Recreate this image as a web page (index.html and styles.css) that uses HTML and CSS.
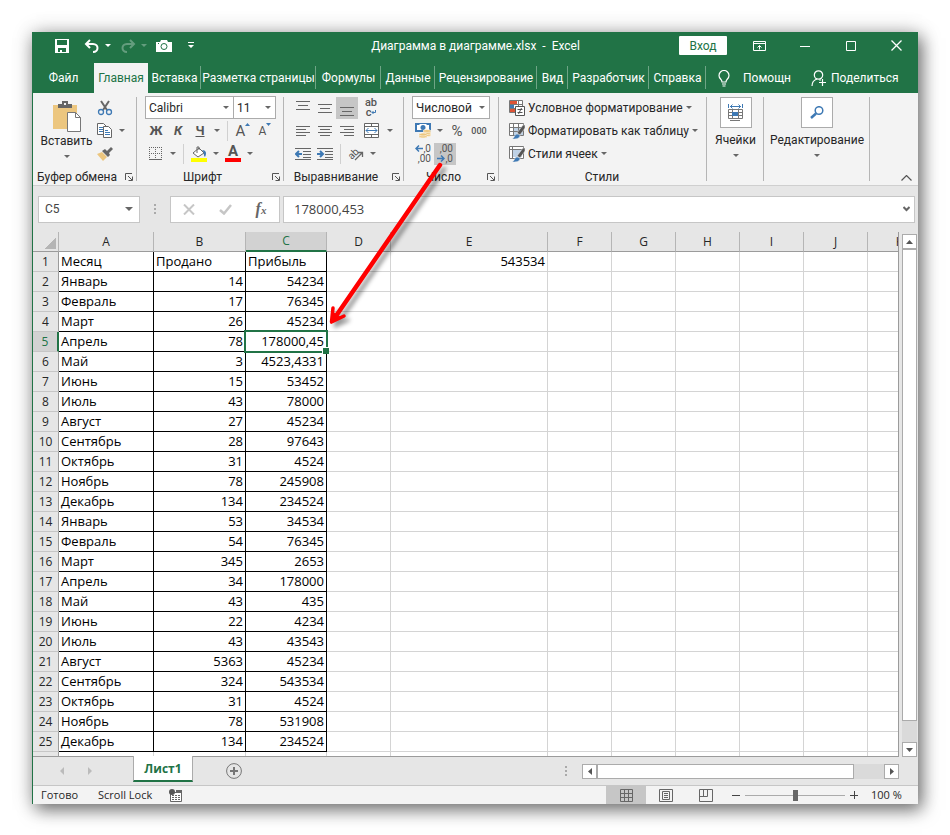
FILE: index.html
```html
<!DOCTYPE html>
<html lang="ru">
<head>
    <meta charset="UTF-8">
    <meta name="viewport" content="width=device-width, initial-scale=1.0">
    <title>Диаграмма в диаграмме.xlsx - Excel</title>
    <link rel="stylesheet" href="styles.css">
</head>
<body>
    <div class="window">
        <!-- Title bar -->
        <header class="titlebar">
            <div class="quick">
                <button class="q-btn" aria-label="Сохранить">
                    <svg width="14" height="14" viewBox="0 0 14 14"><path fill="#fff" fill-rule="evenodd" d="M0 0h14v14H0zM2 1v5h10V1zM3 9v4h2v-2h2v2h4V9z"/></svg>
                </button>
                <button class="q-btn undo" aria-label="Отменить">
                    <svg width="16" height="14" viewBox="0 0 16 14"><path fill="none" stroke="#fff" stroke-width="2" d="M6 1L2 5l4 4M2 5h7c6 0 6 8 0 8"/></svg>
                    <span class="caret"></span>
                </button>
                <button class="q-btn redo" aria-label="Вернуть">
                    <svg width="16" height="14" viewBox="0 0 16 14"><path fill="none" stroke="#fff" stroke-width="2" d="M10 1l4 4-4 4M14 5H7C1 5 1 13 7 13"/></svg>
                    <span class="caret"></span>
                </button>
                <button class="q-btn" aria-label="Камера">
                    <svg width="16" height="12" viewBox="0 0 16 12"><path fill="#fff" d="M0 2h4l1-2h6l1 2h4v10H0z"/><circle cx="8" cy="6.500" r="3" fill="none" stroke="#217346"/><path fill="#217346" d="M2 3h1v1H2z"/></svg>
                </button>
                <button class="q-btn more" aria-label="Настройка панели">
                    <svg width="6" height="7" viewBox="0 0 6 7"><path fill="#fff" d="M0 0h6v1H0zM0 3h6L3 6z"/></svg>
                </button>
            </div>
            <h1>Диаграмма в диаграмме.xlsx &nbsp;- &nbsp;Excel</h1>
            <div class="win-btns">
                <button class="login">Вход</button>
                <button class="w-btn" aria-label="Параметры ленты">
                    <svg width="13" height="10" viewBox="0 0 13 10" fill="none" stroke="#fff"><path d="M.5.5h12v9H.5zM.5 2.500h12M6.500 8.500v-4M4.500 6.500l2-2 2 2"/></svg>
                </button>
                <button class="w-btn" aria-label="Свернуть">
                    <svg width="10" height="10" viewBox="0 0 10 10"><path stroke="#fff" d="M0 5.500h10"/></svg>
                </button>
                <button class="w-btn" aria-label="Развернуть">
                    <svg width="10" height="10" viewBox="0 0 10 10"><path fill="none" stroke="#fff" d="M.5.5h9v9h-9z"/></svg>
                </button>
                <button class="w-btn" aria-label="Закрыть">
                    <svg width="11" height="11" viewBox="0 0 11 11"><path stroke="#fff" stroke-width="1.300" d="M.5.5l10 10M10.500.5l-10 10"/></svg>
                </button>
            </div>
        </header>

        <!-- Ribbon tabs -->
        <nav class="tabs">
            <a href="#" class="file">Файл</a>
            <a href="#" class="active">Главная</a>
            <a href="#">Вставка</a>
            <a href="#">Разметка страницы</a>
            <a href="#">Формулы</a>
            <a href="#">Данные</a>
            <a href="#">Рецензирование</a>
            <a href="#">Вид</a>
            <a href="#">Разработчик</a>
            <a href="#">Справка</a>
            <a href="#" class="help">
                <svg width="12" height="17" viewBox="0 0 12 17" fill="none" stroke="#fff" stroke-width="1.200"><path d="M4 12c0-3-3-3-3-6.500a5 5 0 0 1 10 0C11 9 8 9 8 12zM4 14h4M4.500 16h3"/></svg>
                Помощн
            </a>
            <a href="#" class="share">
                <svg width="16" height="16" viewBox="0 0 16 16" fill="none" stroke="#fff" stroke-width="1.200"><circle cx="7.500" cy="5" r="4.200"/><path d="M1 16c0-4 2-6 5-7M8.500 9.500l1 1M11.500 9v7M8 12.500h7"/></svg>
                Поделиться
            </a>
        </nav>

        <!-- Ribbon -->
        <div class="ribbon">
            <section class="group g-clip">
                <div class="group-body cols">
                    <button class="paste">
                        <svg width="30" height="32" viewBox="0 0 30 32"><path fill="#ecc67f" d="M1 5h24v24H1z"/><path fill="#666" d="M6 4h4V1h6v3h4v4H6z"/><path fill="#f3f3f3" d="M12 3h2v2h-2z"/><path fill="#fff" stroke="#777" d="M15.500 12.500h8l5 5v14h-13z"/><path fill="none" stroke="#777" d="M23.500 12.500v5h5"/></svg>
                        <span>Вставить</span>
                        <span class="caret"></span>
                    </button>
                    <div class="stack">
                        <div class="row">
                            <button class="tool" aria-label="Вырезать">
                                <svg width="16" height="16" viewBox="0 0 16 16" fill="none"><path stroke="#666" stroke-width="2" d="M4 1l6 9M12 1L6 10"/><circle cx="4" cy="12" r="2.500" stroke="#3e79b4" stroke-width="1.300"/><circle cx="12" cy="12" r="2.500" stroke="#3e79b4" stroke-width="1.300"/></svg>
                            </button>
                        </div>
                        <div class="row">
                            <button class="tool" aria-label="Копировать">
                                <svg width="16" height="15" viewBox="0 0 16 15" fill="#fff" stroke="#666"><path d="M.5.5h6l3 3v8h-9z"/><path stroke="#3e79b4" d="M2 4.500h4M2 6.500h4M2 8.500h4"/><path d="M6.500 3.500h5l3 3v8h-8z"/><path stroke="#3e79b4" d="M8 7.500h3M8 9.500h5M8 11.500h5"/></svg>
                            </button>
                            <button class="arrow" aria-label="Варианты копирования"><span class="caret"></span></button>
                        </div>
                        <div class="row">
                            <button class="tool" aria-label="Формат по образцу">
                                <svg width="16" height="14" viewBox="0 0 16 14"><path fill="#ecc67f" d="M0 7l5-2 5 5-4 4z"/><path fill="#666" d="M5 4l3-2 2 2 4-4 2 2-4 4 1 2-2 2z"/></svg>
                            </button>
                        </div>
                    </div>
                </div>
                <footer><h2>Буфер обмена</h2><button class="launch" aria-label="Буфер обмена: параметры"><svg width="8" height="8" viewBox="0 0 8 8"><path fill="none" stroke="#555" d="M7 .5H.5V7M3 3l4 4M7.500 3.500v4h-4"/></svg></button></footer>
            </section>

            <section class="group g-font">
                <div class="group-body">
                    <div class="row">
                        <label class="combo font-name"><select aria-label="Шрифт"><option>Calibri</option></select><span class="caret"></span></label>
                        <label class="combo font-size"><select aria-label="Размер"><option>11</option></select><span class="caret"></span></label>
                    </div>
                    <div class="row">
                        <button class="tool letter">Ж</button>
                        <button class="tool letter italic">К</button>
                        <button class="tool letter under">Ч</button>
                        <button class="arrow" aria-label="Подчёркивание"><span class="caret"></span></button>
                        <span class="sep"></span>
                        <button class="tool grow">A<svg width="5" height="3" viewBox="0 0 5 3"><path fill="#3e79b4" d="M0 3h5L2.500 0z"/></svg></button>
                        <button class="tool grow small">A<svg width="5" height="3" viewBox="0 0 5 3"><path fill="#3e79b4" d="M0 0h5L2.500 3z"/></svg></button>
                    </div>
                    <div class="row">
                        <button class="tool" aria-label="Границы">
                            <svg width="14" height="13" viewBox="0 0 14 13" fill="none" stroke="#666"><path stroke-dasharray="1 1" d="M0 .5h13M0 6.500h13M.5 0v12M6.500 0v12M12.500 0v12"/><path d="M0 12.500h13"/></svg>
                        </button>
                        <button class="arrow" aria-label="Варианты границ"><span class="caret"></span></button>
                        <span class="sep"></span>
                        <button class="tool" aria-label="Цвет заливки">
                            <svg width="16" height="16" viewBox="0 0 16 16"><path fill="#fff" stroke="#666" d="M2 7l6-5 5 5-6 4z"/><path fill="none" stroke="#666" d="M6 7V1h2v3"/><path fill="#3e79b4" d="M11 4c4 0 5 3 3 7-2-2 0-4-3-7z"/><path fill="#ff0" d="M0 12h16v4H0z"/></svg>
                        </button>
                        <button class="arrow" aria-label="Выбор заливки"><span class="caret"></span></button>
                        <button class="tool color">A</button>
                        <button class="arrow" aria-label="Выбор цвета"><span class="caret"></span></button>
                    </div>
                </div>
                <footer><h2>Шрифт</h2><button class="launch" aria-label="Шрифт: параметры"><svg width="8" height="8" viewBox="0 0 8 8"><path fill="none" stroke="#555" d="M7 .5H.5V7M3 3l4 4M7.500 3.500v4h-4"/></svg></button></footer>
            </section>

            <section class="group g-align">
                <div class="group-body">
                    <div class="row">
                        <button class="tool" aria-label="По верхнему краю"><svg width="14" height="16" viewBox="0 0 14 16"><path stroke="#666" d="M0 1.500h14M2 5.500h10M0 9.500h14"/></svg></button>
                        <button class="tool" aria-label="По середине"><svg width="14" height="16" viewBox="0 0 14 16"><path stroke="#666" d="M0 4.500h14M2 8.500h10M0 12.500h14"/></svg></button>
                        <button class="tool on" aria-label="По нижнему краю"><svg width="14" height="16" viewBox="0 0 14 16"><path stroke="#666" d="M0 7.500h14M2 11.500h10M0 15.500h14"/></svg></button>
                        <button class="tool wide wrap" aria-label="Перенести текст"><span>ab</span><span>c<svg width="5" height="5" viewBox="0 0 5 5"><path fill="none" stroke="#3e79b4" d="M4.500 0v2.500H1M2.500 1L1 2.500 2.500 4"/></svg></span></button>
                    </div>
                    <div class="row">
                        <button class="tool" aria-label="По левому краю"><svg width="14" height="12" viewBox="0 0 14 12"><path stroke="#666" d="M0 1.500h14M0 4.500h10M0 7.500h14M0 10.500h10"/></svg></button>
                        <button class="tool" aria-label="По центру"><svg width="14" height="12" viewBox="0 0 14 12"><path stroke="#666" d="M0 1.500h14M2 4.500h10M0 7.500h14M2 10.500h10"/></svg></button>
                        <button class="tool" aria-label="По правому краю"><svg width="14" height="12" viewBox="0 0 14 12"><path stroke="#666" d="M0 1.500h14M4 4.500h10M0 7.500h14M4 10.500h10"/></svg></button>
                        <button class="tool wide" aria-label="Объединить"><svg width="15" height="15" viewBox="0 0 15 15" fill="none" stroke="#666"><path fill="#fff" d="M.5.5h14v14H.5z"/><path d="M0 3.500h15M0 11.500h15M7.500 0v3M7.500 12v3"/><path stroke="#3e79b4" d="M2 7.500h11M4.500 5L2 7.500 4.500 10M10.500 5L13 7.500 10.500 10"/></svg></button>
                        <button class="arrow" aria-label="Варианты объединения"><span class="caret"></span></button>
                    </div>
                    <div class="row">
                        <button class="tool" aria-label="Уменьшить отступ"><svg width="16" height="12" viewBox="0 0 16 12" fill="none"><path stroke="#666" d="M0 .5h16M8 3.500h8M8 6.500h8M8 9.500h8M0 11.500h16"/><path stroke="#3e79b4" stroke-width="2" d="M7 6H1M4 3L1 6l3 3"/></svg></button>
                        <button class="tool" aria-label="Увеличить отступ"><svg width="16" height="12" viewBox="0 0 16 12" fill="none"><path stroke="#666" d="M0 .5h16M8 3.500h8M8 6.500h8M8 9.500h8M0 11.500h16"/><path stroke="#3e79b4" stroke-width="2" d="M0 6h6M3 3l3 3-3 3"/></svg></button>
                        <span class="sep"></span>
                        <button class="tool orient" aria-label="Ориентация"><span>ab</span><svg width="10" height="10" viewBox="0 0 10 10"><path fill="none" stroke="#666" stroke-width="1.300" d="M1 9l7-7M4 1.500h4.500V6"/></svg></button>
                        <button class="arrow" aria-label="Выбор ориентации"><span class="caret"></span></button>
                    </div>
                </div>
                <footer><h2>Выравнивание</h2><button class="launch" aria-label="Выравнивание: параметры"><svg width="8" height="8" viewBox="0 0 8 8"><path fill="none" stroke="#555" d="M7 .5H.5V7M3 3l4 4M7.500 3.500v4h-4"/></svg></button></footer>
            </section>

            <section class="group g-num">
                <div class="group-body">
                    <div class="row">
                        <label class="combo"><select aria-label="Числовой формат"><option>Числовой</option></select><span class="caret"></span></label>
                    </div>
                    <div class="row">
                        <button class="tool" aria-label="Финансовый формат"><svg width="16" height="15" viewBox="0 0 16 15"><path fill="#3e79b4" d="M0 0h16v9H0z"/><path fill="#fff" d="M2 2h2l1-1h6l1 1h2v5H2z"/><circle cx="8" cy="4.500" r="2.500" fill="#3e79b4"/><g fill="#ecc67f" stroke="#fff" stroke-width=".5"><ellipse cx="12" cy="12" rx="4" ry="1.500"/><ellipse cx="12" cy="10" rx="4" ry="1.500"/><ellipse cx="12" cy="8" rx="4" ry="1.500"/><ellipse cx="8" cy="13.500" rx="4" ry="1.500"/><ellipse cx="8" cy="11.500" rx="4" ry="1.500"/></g></svg></button>
                        <button class="arrow" aria-label="Выбор валюты"><span class="caret"></span></button>
                        <button class="tool percent">%</button>
                        <button class="tool zeros">000</button>
                    </div>
                    <div class="row">
                        <button class="tool digits" aria-label="Увеличить разрядность"><span><svg width="8" height="7" viewBox="0 0 8 7"><path fill="none" stroke="#3e79b4" stroke-width="1.500" d="M8 3.500H1M4 .5l-3 3 3 3"/></svg>,0</span><span>,00</span></button>
                        <button class="tool digits on" aria-label="Уменьшить разрядность"><span>,00</span><span><svg width="8" height="7" viewBox="0 0 8 7"><path fill="none" stroke="#3e79b4" stroke-width="1.500" d="M0 3.500h7M4 .5l3 3-3 3"/></svg>,0</span></button>
                    </div>
                </div>
                <footer><h2>Число</h2><button class="launch" aria-label="Число: параметры"><svg width="8" height="8" viewBox="0 0 8 8"><path fill="none" stroke="#555" d="M7 .5H.5V7M3 3l4 4M7.500 3.500v4h-4"/></svg></button></footer>
            </section>

            <section class="group g-styles">
                <div class="group-body">
                    <div class="row">
                        <button class="text-btn"><svg width="16" height="16" viewBox="0 0 16 16"><path fill="#fff" stroke="#777" d="M.5.5h13v12H.5z"/><path fill="#dd5437" d="M1 1h7v3H1zM1 9h5v3H1z"/><path fill="#3e79b4" d="M1 5h4v3H1z"/><path stroke="#777" d="M0 4.500h13M0 8.500h6M9.500 0v6"/><path fill="#fff" stroke="#555" d="M6.500 6.500h9v9h-9z"/><path stroke="#555" d="M8.500 9.500h5M8.500 12.500h5M12.500 8l-3 6"/></svg>Условное форматирование<span class="caret"></span></button>
                    </div>
                    <div class="row">
                        <button class="text-btn"><svg width="16" height="16" viewBox="0 0 16 16"><path fill="#fff" stroke="#777" d="M.5.5h14v12H.5z"/><path fill="#bfd2e6" d="M5 4h9v8H5z"/><path stroke="#777" d="M0 4.500h14M0 8.500h14M4.500 0v12M9.500 0v12"/><path fill="#555" stroke="#f3f3f3" stroke-width=".5" d="M8 10l6-8h2v3l-5 7z"/><path fill="#3e79b4" stroke="#f3f3f3" stroke-width=".5" d="M3 16c3-1 2-5 5-5 2 0 3 1 3 2-1 3-4 3-8 3z"/></svg>Форматировать как таблицу<span class="caret"></span></button>
                    </div>
                    <div class="row">
                        <button class="text-btn"><svg width="16" height="16" viewBox="0 0 16 16"><path fill="#fff" stroke="#777" d="M.5.5h14v12H.5z"/><path stroke="#777" d="M0 3.500h14M3.500 0v12"/><path fill="#bfd2e6" d="M4 4h9v7H4z"/><path fill="#555" stroke="#f3f3f3" stroke-width=".5" d="M8 10l6-8h2v3l-5 7z"/><path fill="#3e79b4" stroke="#f3f3f3" stroke-width=".5" d="M3 16c3-1 2-5 5-5 2 0 3 1 3 2-1 3-4 3-8 3z"/></svg>Стили ячеек<span class="caret"></span></button>
                    </div>
                </div>
                <footer><h2>Стили</h2></footer>
            </section>

            <section class="group g-cells">
                <button class="big">
                    <span class="box"><svg width="16" height="17" viewBox="0 0 16 17" fill="none"><path stroke="#3e79b4" d="M.5 0v4M14.500 0v4M2 2.500h11M4.500.5l-2 2 2 2M10.500.5l2 2-2 2"/><path stroke="#777" d="M.5 5.500h14v9H.5zM0 8.500h15M0 11.500h15M4.500 5v10M10.500 5v10M2 16.500h10"/><path fill="#3e79b4" d="M4 8h6v4H4z"/></svg></span>
                    <span>Ячейки</span>
                    <span class="caret"></span>
                </button>
            </section>
            <section class="group g-edit">
                <button class="big">
                    <span class="box"><svg width="14" height="13" viewBox="0 0 14 13" fill="none" stroke="#3e79b4"><circle cx="9" cy="4.500" r="3.800" stroke-width="1.500"/><path stroke-width="2.500" d="M6 7.500L1 12"/></svg></span>
                    <span>Редактирование</span>
                    <span class="caret"></span>
                </button>
            </section>
            <button class="collapse" aria-label="Свернуть ленту"><svg width="11" height="6" viewBox="0 0 11 6"><path fill="none" stroke="#555" stroke-width="1.200" d="M.5 5.500l5-5 5 5"/></svg></button>
        </div>

        <!-- Formula bar -->
        <div class="formula-bar">
            <div class="name-box"><input type="text" value="C5" aria-label="Имя"><span class="caret big-caret"></span></div>
            <span class="dots"></span>
            <div class="fx">
                <button aria-label="Отмена"><svg width="12" height="11" viewBox="0 0 12 11"><path stroke="#c6c6c6" stroke-width="2" d="M1 .5l10 10M11 .5l-10 10"/></svg></button>
                <button aria-label="Ввод"><svg width="13" height="11" viewBox="0 0 13 11"><path fill="none" stroke="#c6c6c6" stroke-width="2.500" d="M1 6l4 3.500L12 1"/></svg></button>
                <button class="fx-sign"><i>f<small>x</small></i></button>
            </div>
            <div class="formula"><input type="text" value="178000,453" aria-label="Формула"><svg width="7" height="6" viewBox="0 0 7 6"><path fill="none" stroke="#666" stroke-width="2" d="M.5 1l3 3 3-3"/></svg></div>
        </div>

        <!-- Sheet -->
        <div class="sheet">
            <div class="grid">
                <table>
                    <colgroup>
                        <col class="c-num"><col class="c-a"><col class="c-b"><col class="c-c"><col class="c-d"><col class="c-e"><col class="c-f"><col class="c-f"><col class="c-f"><col class="c-f"><col class="c-f"><col class="c-f">
                    </colgroup>
                    <thead>
                        <tr><th class="corner"></th><th>A</th><th>B</th><th class="sel">C</th><th>D</th><th>E</th><th>F</th><th>G</th><th>H</th><th>I</th><th>J</th><th>K</th></tr>
                    </thead>
                    <tbody id="rows"></tbody>
                </table>
            </div>
            <div class="vscroll">
                <button aria-label="Вверх"><svg width="7" height="4" viewBox="0 0 7 4"><path fill="#555" d="M0 4h7L3.500 0z"/></svg></button>
                <div class="v-thumb"></div>
                <button aria-label="Вниз"><svg width="7" height="4" viewBox="0 0 7 4"><path fill="#555" d="M0 0h7L3.500 4z"/></svg></button>
            </div>
        </div>

        <!-- Sheet tabs -->
        <div class="sheet-tabs">
            <div class="sheet-nav">
                <button aria-label="Предыдущий лист"><svg width="4" height="8" viewBox="0 0 4 8"><path fill="#bbb" d="M4 0v8L0 4z"/></svg></button>
                <button aria-label="Следующий лист"><svg width="4" height="8" viewBox="0 0 4 8"><path fill="#bbb" d="M0 0v8l4-4z"/></svg></button>
            </div>
            <a href="#" class="sheet-tab">Лист1</a>
            <button class="add" aria-label="Новый лист"><svg width="16" height="16" viewBox="0 0 16 16" fill="none" stroke="#777"><circle cx="8" cy="8" r="7.400"/><path stroke-width="2" d="M4 8h8M8 4v8"/></svg></button>
            <span class="dots"></span>
            <div class="hscroll">
                <button aria-label="Влево"><svg width="4" height="7" viewBox="0 0 4 7"><path fill="#555" d="M4 0v7L0 3.500z"/></svg></button>
                <div class="h-thumb"></div>
                <button aria-label="Вправо"><svg width="4" height="7" viewBox="0 0 4 7"><path fill="#555" d="M0 0v7l4-3.500z"/></svg></button>
            </div>
        </div>

        <!-- Status bar -->
        <footer class="status">
            <span class="ready">Готово</span>
            <span class="lock">Scroll Lock</span>
            <svg width="14" height="13" viewBox="0 0 14 13"><path fill="#fff" stroke="#666" d="M1.500 3.500h11v9h-11z"/><path fill="#666" d="M7 1h6v3H7z"/><path stroke="#666" stroke-dasharray="2 1" d="M3 6.500h8M3 8.500h8M3 10.500h8"/><circle cx="3" cy="3" r="3" fill="#555"/></svg>
            <div class="views">
                <button class="on" aria-label="Обычный"><svg width="13" height="13" viewBox="0 0 13 13"><path fill="none" stroke="#666" d="M.5.5h12v12H.5zM0 4.500h13M0 8.500h13M4.500 0v13M8.500 0v13"/></svg></button>
                <button aria-label="Разметка страницы"><svg width="14" height="13" viewBox="0 0 14 13"><path fill="none" stroke="#666" d="M.5.5h13v12H.5zM3.500 2.500h7v8h-7zM5 4.500h4M5 6.500h4M5 8.500h4"/></svg></button>
                <button aria-label="Страничный"><svg width="14" height="13" viewBox="0 0 14 13"><path fill="none" stroke="#666" d="M.5.5h13v12H.5zM.5 7.500h8v-7M4.500 0v7"/></svg></button>
            </div>
            <button class="zoom-btn" aria-label="Уменьшить"><svg width="8" height="8" viewBox="0 0 8 8"><path stroke="#444" d="M0 4.500h8"/></svg></button>
            <input type="range" min="0" max="100" value="50" aria-label="Масштаб">
            <button class="zoom-btn" aria-label="Увеличить"><svg width="8" height="8" viewBox="0 0 8 8"><path stroke="#444" d="M0 4.500h8M4.500 0v8"/></svg></button>
            <span class="zoom">100 %</span>
        </footer>

        <!-- Pointer to the selected cell -->
        <svg class="pointer" width="130" height="180" viewBox="0 0 130 180" fill="none" stroke="#f00" stroke-linecap="round" stroke-linejoin="round">
            <path stroke-width="4.500" d="M122 9L18 160"/>
            <path stroke-width="3.500" d="M15 152L13.500 166L26 160"/>
            <path fill="#f00" d="M13 167L16 157L22 161Z"/>
        </svg>
    </div>

    <script>
        const data = [
            ["Месяц", "Продано", "Прибыль"],
            ["Январь", 14, "54234"],
            ["Февраль", 17, "76345"],
            ["Март", 26, "45234"],
            ["Апрель", 78, "178000,45"],
            ["Май", 3, "4523,4331"],
            ["Июнь", 15, "53452"],
            ["Июль", 43, "78000"],
            ["Август", 27, "45234"],
            ["Сентябрь", 28, "97643"],
            ["Октябрь", 31, "4524"],
            ["Ноябрь", 78, "245908"],
            ["Декабрь", 134, "234524"],
            ["Январь", 53, "34534"],
            ["Февраль", 54, "76345"],
            ["Март", 345, "2653"],
            ["Апрель", 34, "178000"],
            ["Май", 43, "435"],
            ["Июнь", 22, "4234"],
            ["Июль", 43, "43543"],
            ["Август", 5363, "45234"],
            ["Сентябрь", 324, "543534"],
            ["Октябрь", 31, "4524"],
            ["Ноябрь", 78, "531908"],
            ["Декабрь", 134, "234524"]
        ];
        const tbody = document.getElementById("rows");

        data.forEach((row, i) => {
            const tr = document.createElement("tr");
            const selected = i === 4;
            let html = `<th class="${selected ? "sel" : ""}">${i + 1}</th>`;
            row.forEach((value, col) => {
                let cls = "data";
                if (col > 0 && i > 0) cls += " num";
                if (selected && col === 2) cls += " current";
                html += `<td class="${cls}">${value}</td>`;
            });
            html += "<td></td>";
            html += `<td class="num">${i === 0 ? "543534" : ""}</td>`;
            html += "<td></td>".repeat(6);
            tr.innerHTML = html;
            tbody.appendChild(tr);
        });

        // top edge of the next row
        const cut = document.createElement("tr");
        cut.className = "cut";
        cut.innerHTML = "<th></th>" + "<td></td>".repeat(11);
        tbody.appendChild(cut);
    </script>
</body>
</html>
```
FILE: styles.css
```css
* {
    box-sizing: border-box;
}
body {
    margin: 0;
    padding: 32px;
    background: #fff;
    font-family: Roboto, "Open Sans", sans-serif;
    font-size: 12px;
    line-height: 16px;
    color: #262626;
}
button, input, select {
    font: inherit;
    color: inherit;
    background: none;
    border: none;
    border-radius: 0;
    padding: 0;
    margin: 0;
    outline: none;
}
button {
    display: flex;
    align-items: center;
    justify-content: center;
    flex: none;
    white-space: nowrap;
}
svg {
    display: block;
    flex: none;
}
a {
    color: inherit;
    text-decoration: none;
}
h1, h2 {
    font-size: 12px;
    font-weight: normal;
    margin: 0;
    white-space: nowrap;
}
.caret {
    flex: none;
    border: 3px solid transparent;
    border-top-color: #666;
    border-bottom: none;
}
.window {
    position: relative;
    border-left: 1px solid #217346;
    background: #e6e6e6;
    box-shadow: 4px 6px 16px rgba(0, 0, 0, 0.5), 0 0 20px rgba(0, 0, 0, 0.2);
}

/* Title bar */
.titlebar {
    display: grid;
    grid-template-columns: 1fr auto 1fr;
    align-items: center;
    height: 31px;
    padding-bottom: 4px;
    background: #217346;
    color: #fff;
}
.quick {
    display: flex;
    align-items: center;
    padding-left: 22px;
    gap: 9px;
}
.q-btn {
    gap: 5px;
}
.q-btn .caret {
    border-top-color: #fff;
}
.undo {
    margin-left: 6px;
}
.redo {
    opacity: 0.3;
}
.more {
    margin-left: 7px;
}
.win-btns {
    display: flex;
    align-items: center;
    justify-content: flex-end;
}
.login {
    width: 48px;
    height: 19px;
    margin-right: 9px;
    background: #fff;
    color: #217346;
    border-radius: 1px;
}
.w-btn {
    width: 46px;
    height: 24px;
}
.w-btn:last-child {
    width: 44px;
}

/* Ribbon tabs */
.tabs {
    display: grid;
    grid-template-columns: 61px 54px 53px 115px 65px 54px 102px 31px 81px 57px 105px 1fr;
    height: 30px;
    background: #217346;
    color: #fff;
}
.tabs a {
    display: flex;
    align-items: center;
    justify-content: center;
    white-space: nowrap;
    background: linear-gradient(#6fa586, #6fa586) no-repeat right 3px / 1px 23px;
}
.tabs .file, .tabs .help, .tabs .share {
    background: none;
}
.tabs .active {
    background: #f3f3f3;
    color: #217346;
}
.tabs .help {
    gap: 13px;
    justify-content: flex-start;
    padding-left: 12px;
}
.tabs .share {
    gap: 4px;
    justify-content: flex-start;
}

/* Ribbon */
.ribbon {
    display: flex;
    height: 93px;
    padding-top: 3px;
    background: #f3f3f3;
    border-bottom: 1px solid #cfcfcf;
}
.group {
    display: flex;
    flex-direction: column;
    flex: none;
    background: linear-gradient(#b5b5b5, #b5b5b5) no-repeat right 1px / 1px 84px;
}
.group-body {
    height: 73px;
    padding-left: 8px;
}
.g-clip { width: 104px; }
.g-font { width: 147px; }
.g-align { width: 120px; }
.g-num { width: 95px; }
.g-styles { width: 208px; }
.g-cells { width: 57px; }
.g-edit { width: 106px; }
.group footer {
    display: flex;
    align-items: center;
}
.group h2 {
    flex: 1;
    text-align: center;
}
.launch {
    width: 16px;
}
.row {
    display: flex;
    align-items: center;
    height: 23px;
}
.cols {
    display: flex;
    padding-left: 6px;
}
.paste {
    width: 55px;
    flex-direction: column;
    justify-content: flex-start;
    padding-top: 4px;
}
.paste span {
    line-height: 19px;
}
.paste .caret {
    margin-top: 4px;
}
.tool {
    width: 22px;
    height: 22px;
    color: #555;
}
.tool.on {
    background: #c6c6c6;
}
.wide {
    width: 26px;
}
.arrow {
    width: 12px;
    height: 22px;
}
.sep {
    width: 1px;
    height: 20px;
    margin: 0 4px;
    background: #d0d0d0;
}
.combo {
    display: flex;
    align-items: center;
    justify-content: space-between;
    height: 23px;
    width: 78px;
    padding: 0 4px 0 3px;
    background: #fff;
    border: 1px solid #ababab;
}
.combo select {
    appearance: none;
    flex: 1;
    min-width: 0;
}
.font-name {
    width: 89px;
}
.font-size {
    width: 43px;
    margin-left: -1px;
}
.letter {
    font-weight: bold;
    font-size: 13px;
}
.italic {
    font-style: italic;
}
.under {
    text-decoration: underline;
}
.grow {
    font-size: 15px;
}
.grow svg {
    align-self: flex-start;
    margin-top: 3px;
}
.small {
    font-size: 12px;
}
.color {
    width: 22px;
    font-size: 15px;
    font-weight: bold;
    line-height: 14px;
    background: linear-gradient(#f00, #f00) no-repeat center 15px / 16px 4px;
    padding-bottom: 6px;
}
.wrap, .digits {
    flex-direction: column;
    line-height: 10px;
}
.wrap span, .digits span {
    display: flex;
    align-items: center;
}
.wrap {
    font-size: 11px;
    font-weight: 500;
}
.digits {
    font-size: 10px;
    align-items: flex-end;
    padding-right: 3px;
}
.orient span {
    font-size: 10px;
    transform: rotate(-45deg);
}
.orient svg {
    margin-left: -5px;
    margin-top: 4px;
}
.percent {
    font-size: 15px;
}
.zeros {
    font-size: 9px;
    font-weight: 500;
}
.text-btn {
    gap: 3px;
    margin-left: 2px;
}
.g-styles h2 {
    padding-right: 2px;
}
.big {
    flex-direction: column;
    align-self: center;
    padding-top: 1px;
}
.box {
    display: flex;
    align-items: center;
    justify-content: center;
    width: 32px;
    height: 31px;
    margin-bottom: 4px;
    background: #fff;
    border: 1px solid #ababab;
}
.big .caret {
    margin-top: 6px;
}
.collapse {
    align-self: flex-end;
    margin-left: auto;
    padding: 0 6px 4px;
}

/* Formula bar */
.formula-bar {
    display: flex;
    align-items: center;
    height: 46px;
    padding: 0 3px 0 5px;
    color: #444;
}
.name-box, .fx, .formula {
    display: flex;
    align-items: center;
    height: 27px;
    background: #fff;
    border: 1px solid #c6c6c6;
}
.name-box {
    width: 102px;
    padding: 0 6px;
}
.name-box input {
    flex: 1;
    min-width: 0;
}
.big-caret {
    border-width: 4px;
    border-bottom: none;
}
.dots {
    flex: none;
    width: 2px;
    height: 10px;
    background: repeating-linear-gradient(#aaa 0 2px, transparent 2px 4px);
}
.formula-bar .dots {
    margin: 0 14px;
}
.fx {
    width: 110px;
    margin-right: 3px;
}
.fx button {
    width: 36px;
}
.fx-sign {
    font-family: "Liberation Serif", serif;
    font-size: 16px;
    font-weight: bold;
    color: #666;
}
.fx-sign small {
    font-size: 11px;
}
.formula {
    flex: 1;
    padding: 0 4px 0 10px;
}
.formula input {
    flex: 1;
    font-family: "Open Sans", sans-serif;
    font-size: 13px;
}

/* Sheet */
.sheet {
    display: flex;
}
.grid {
    flex: 1;
    min-width: 0;
    overflow: hidden;
    border-right: 1px solid #9b9b9b;
    border-bottom: 1px solid #9b9b9b;
}
table {
    table-layout: fixed;
    width: 0;
    border-collapse: separate;
    border-spacing: 0;
    background: #fff;
    color: #000;
    font-family: "Open Sans", sans-serif;
}
.c-num { width: 26px; }
.c-a { width: 95px; }
.c-b { width: 92px; }
.c-c { width: 81px; }
.c-d, .c-f { width: 64px; }
.c-e { width: 157px; }
th, td {
    height: 20px;
    padding: 0 2px;
    font-size: 13px;
    font-weight: normal;
    line-height: 19px;
    white-space: nowrap;
    border-right: 1px solid #d4d4d4;
    border-bottom: 1px solid #d4d4d4;
}
th {
    padding: 0;
    font-size: 12px;
    background: #e6e6e6;
    color: #262626;
}
thead th {
    border-right-color: #b5b5b5;
    border-bottom-color: #9b9b9b;
}
tbody th {
    border-right-color: #9b9b9b;
    border-bottom-color: #c6c6c6;
}
.corner {
    background: linear-gradient(135deg, #e6e6e6 50%, #b5b5b5 50%) no-repeat 11px 5px / 12px 12px #e6e6e6;
}
th.sel {
    background: #d2d2d2;
    color: #217346;
}
thead th.sel {
    border-bottom: 2px solid #217346;
    line-height: 18px;
}
tbody th.sel {
    border-right: 2px solid #217346;
}
td.data {
    border-color: #000;
}
td.num {
    text-align: right;
}
.current {
    position: relative;
}
.current::before {
    content: "";
    position: absolute;
    inset: -2px;
    border: 2px solid #217346;
}
.current::after {
    content: "";
    position: absolute;
    right: -3px;
    bottom: -3px;
    width: 6px;
    height: 6px;
    background: #217346;
    border: 1px solid #fff;
    border-right: none;
    border-bottom: none;
}
.cut th, .cut td {
    height: 4px;
    line-height: 0;
    border-bottom: none;
}
.vscroll {
    display: flex;
    flex-direction: column;
    width: 15px;
    margin: 2px 1px 0 3px;
    background: #dadada;
}
.vscroll button, .hscroll button {
    width: 15px;
    height: 15px;
    background: #fff;
    border: 1px solid #ababab;
}
.v-thumb {
    height: 472px;
    margin-bottom: auto;
    background: #fff;
    border: 1px solid #ababab;
}

/* Sheet tabs */
.sheet-tabs {
    display: flex;
    align-items: center;
    height: 28px;
    padding-right: 19px;
}
.sheet-nav {
    display: flex;
    width: 100px;
    padding-left: 27px;
    gap: 24px;
}
.sheet-tab {
    align-self: flex-start;
    width: 60px;
    height: 26px;
    margin-top: -1px;
    line-height: 26px;
    text-align: center;
    font-family: "Open Sans", sans-serif;
    font-weight: bold;
    background: #fff;
    color: #217346;
    border: 1px solid #ababab;
    border-top: none;
    border-bottom: 2px solid #217346;
}
.add {
    margin-left: 33px;
    margin-right: auto;
}
.hscroll {
    display: flex;
    width: 37%;
    max-width: 317px;
    margin-left: 15px;
    background: #dadada;
}
.h-thumb {
    width: 81%;
    margin-right: auto;
    background: #fff;
    border: 1px solid #ababab;
}

/* Status bar */
.status {
    display: flex;
    align-items: center;
    height: 19px;
    padding-left: 8px;
    background: #f3f3f3;
    border-top: 1px solid #c6c6c6;
    font-family: "Open Sans", sans-serif;
    font-size: 11px;
    white-space: nowrap;
}
.ready {
    width: 57px;
}
.lock {
    width: 71px;
}
.views {
    display: flex;
    align-self: stretch;
    margin-left: auto;
    margin-right: 6px;
}
.views button {
    width: 40px;
}
.views .on {
    background: #c6c6c6;
}
.status input {
    appearance: none;
    width: 100px;
    height: 11px;
    margin: 0 5px;
    background: linear-gradient(#ababab, #ababab) no-repeat center / 100% 1px;
}
.status input::-webkit-slider-thumb {
    appearance: none;
    width: 5px;
    height: 11px;
    background: #666;
}
.zoom {
    width: 60px;
    padding-left: 13px;
}

/* Red pointer over the sheet */
.pointer {
    position: absolute;
    left: 285px;
    top: 124px;
    filter: drop-shadow(4px 4px 2px rgba(0, 0, 0, 0.4));
    pointer-events: none;
}
```
